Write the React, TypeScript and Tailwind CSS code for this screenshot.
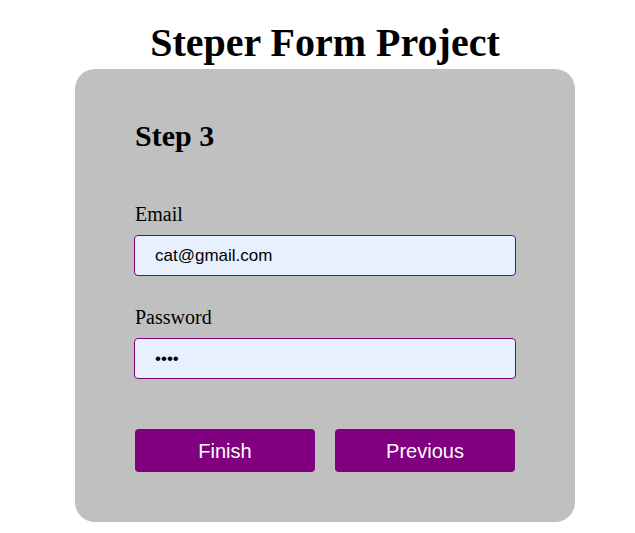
import { useState } from "react";

const SERIF = "font-['Liberation_Serif','Times_New_Roman',serif]";
const SANS = "font-['Liberation_Sans',Arial,sans-serif]";

export default function App() {
  const [email, setEmail] = useState("cat@gmail.com");
  const [password, setPassword] = useState("1234");

  return (
    <div className={`min-h-[533px] bg-white pt-[20px] ${SERIF}`}>
      <div className="ml-[75px] w-[500px]">
        <h1 className="text-center text-[40px] font-bold leading-[46px] text-black">
          Steper Form Project
        </h1>

        <form
          onSubmit={(e) => e.preventDefault()}
          className="mt-[3px] flex flex-col rounded-[20px] bg-[#c0c0c0] px-[60px] pb-[50px] pt-[50px]"
        >
          <h2 className="text-[30px] font-bold leading-[34px] text-black">Step 3</h2>

          <label htmlFor="email" className="mt-[50px] text-[20px] leading-[23px] text-black">
            Email
          </label>
          <input
            id="email"
            type="email"
            value={email}
            onChange={(e) => setEmail(e.target.value)}
            className={`-ml-px mt-[9px] h-[41px] w-[382px] rounded-[4px] border border-[#800080] bg-[#e8f0fe] pl-[20px] text-[17px] text-black outline-none ${SANS}`}
          />

          <label htmlFor="password" className="mt-[30px] text-[20px] leading-[23px] text-black">
            Password
          </label>
          <input
            id="password"
            type="password"
            value={password}
            onChange={(e) => setPassword(e.target.value)}
            className={`-ml-px mt-[9px] h-[41px] w-[382px] rounded-[4px] border border-[#800080] bg-[#e8f0fe] pl-[20px] text-[17px] text-black outline-none ${SANS}`}
          />

          <div className="mt-[50px] flex gap-[20px]">
            <button
              type="submit"
              className={`h-[43px] w-[180px] rounded-[4px] bg-[#800080] text-[20px] text-white ${SANS}`}
            >
              Finish
            </button>
            <button
              type="button"
              className={`h-[43px] w-[180px] rounded-[4px] bg-[#800080] text-[20px] text-white ${SANS}`}
            >
              Previous
            </button>
          </div>
        </form>
      </div>
    </div>
  );
}
